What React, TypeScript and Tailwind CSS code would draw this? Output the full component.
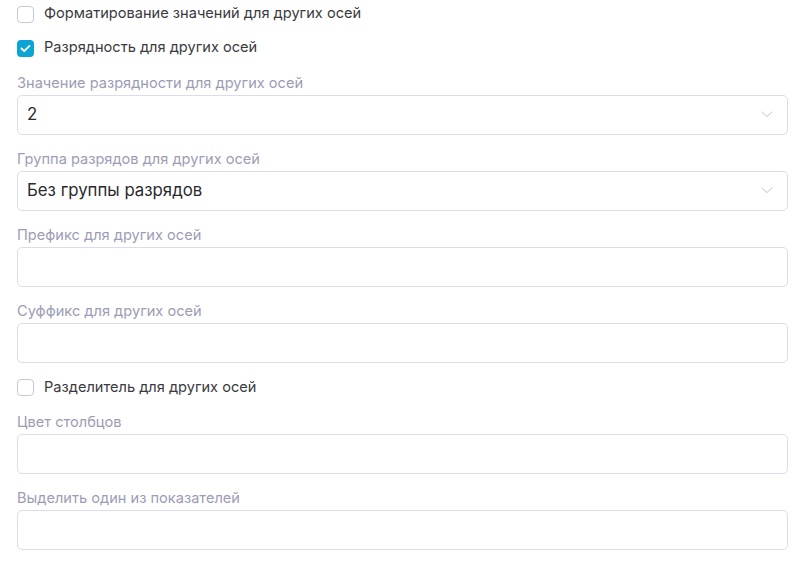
import React from "react";

const font = { fontFamily: "Inter, 'Noto Sans', sans-serif" };

function Checkbox({ checked, label }: { checked?: boolean; label: string }) {
  return (
    <div className="flex items-center h-5">
      {checked ? (
        <div className="w-[17px] h-[17px] rounded-[4px] bg-[#0aa5d2] flex items-center justify-center">
          <svg width="11" height="9" viewBox="0 0 11 9" fill="none">
            <path d="M1.5 4.5 L4.2 7.2 L9.5 1.8" stroke="white" strokeWidth="1.8" strokeLinecap="round" strokeLinejoin="round" />
          </svg>
        </div>
      ) : (
        <div className="w-[17px] h-[17px] rounded-[4px] border border-[#c9c8da] bg-white" />
      )}
      <span className="ml-[10px] text-[14.6px] text-[#3a3a40]">{label}</span>
    </div>
  );
}

function Chevron() {
  return (
    <svg width="12" height="7" viewBox="0 0 12 7" fill="none">
      <path d="M1 1 L6 5.5 L11 1" stroke="#c4c4d6" strokeWidth="1" strokeLinecap="round" strokeLinejoin="round" />
    </svg>
  );
}

function Field({ label, value, select }: { label: string; value?: string; select?: boolean }) {
  return (
    <div className="flex flex-col">
      <div className="h-5 leading-5 text-[14.6px] text-[#9c9db5] whitespace-nowrap">{label}</div>
      <div className="mt-[2px] h-10 rounded-[5px] border border-[#dddcea] bg-white flex items-center pl-[9px] pr-[14px]">
        <span className="flex-1 text-[16.8px] text-[#2a2a2e]">{value}</span>
        {select && <Chevron />}
      </div>
    </div>
  );
}

export default function App() {
  return (
    <div className="w-[804px] h-[566px] bg-white overflow-hidden" style={font}>
      <div className="pl-[17px] pr-[16px] pt-[4px] flex flex-col gap-[14.25px]">
        <Checkbox label="Форматирование значений для других осей" />
        <Checkbox checked label="Разрядность для других осей" />
        <Field label="Значение разрядности для других осей" value="2" select />
        <Field label="Группа разрядов для других осей" value="Без группы разрядов" select />
        <Field label="Префикс для других осей" />
        <Field label="Суффикс для других осей" />
        <Checkbox label="Разделитель для других осей" />
        <Field label="Цвет столбцов" />
        <Field label="Выделить один из показателей" />
      </div>
    </div>
  );
}
